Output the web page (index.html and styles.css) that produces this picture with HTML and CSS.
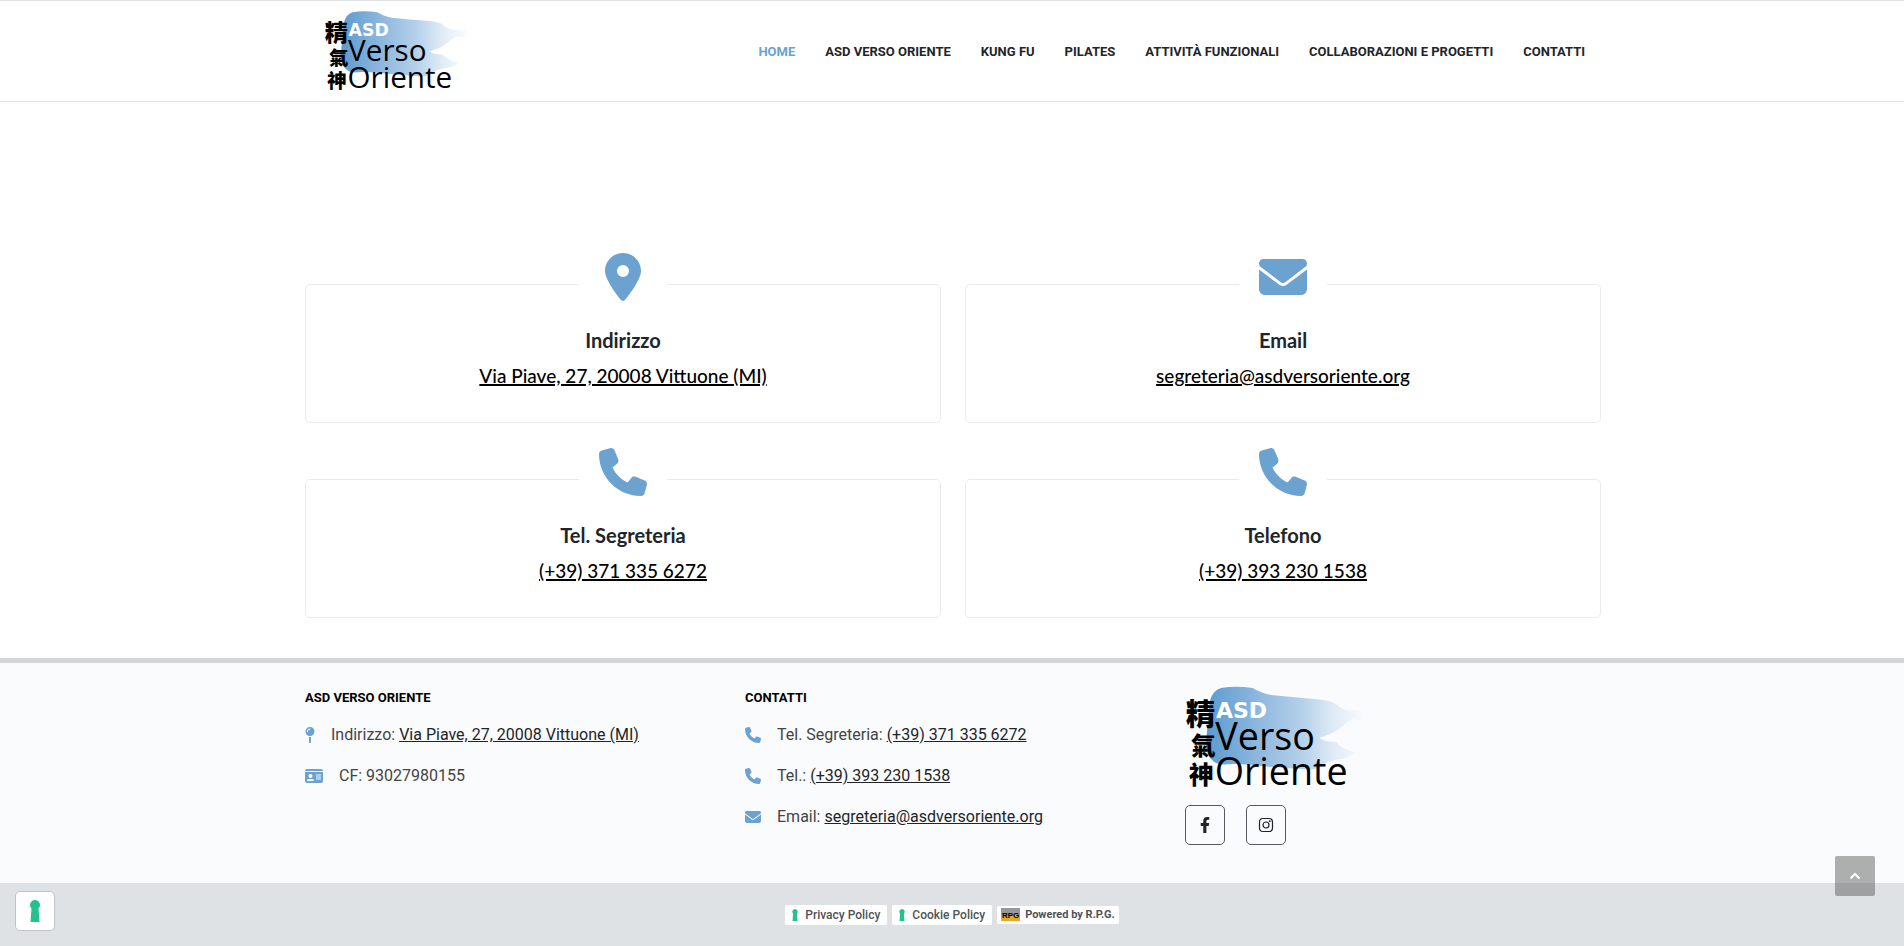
FILE: index.html
```
<!DOCTYPE html>
<html lang="it">

<head>
    <meta charset="utf-8">
    <meta name="viewport" content="width=device-width, initial-scale=1">
    <title>ASD Verso Oriente</title>
    <link rel="stylesheet" href="styles.css">
</head>

<body>
    <!-- shared icons -->
    <svg class="sprite" aria-hidden="true">
        <symbol id="icon-location" viewBox="0 0 384 512">
            <path d="M215.7 499.2C267 435 384 279.4 384 192C384 86 298 0 192 0S0 86 0 192c0 87.4 117 243 168.3 307.2c12.3 15.3 35.1 15.3 47.4 0zM192 128a64 64 0 1 1 0 128 64 64 0 1 1 0-128z"/>
        </symbol>
        <symbol id="icon-envelope" viewBox="0 0 512 512">
            <path d="M48 64C21.5 64 0 85.5 0 112c0 15.1 7.1 29.3 19.2 38.4L236.8 313.6c11.4 8.5 27 8.5 38.4 0L492.8 150.4c12.1-9.1 19.2-23.3 19.2-38.4c0-26.5-21.5-48-48-48H48zM0 176V384c0 35.3 28.7 64 64 64H448c35.3 0 64-28.7 64-64V176L294.4 339.2c-22.8 17.1-54 17.1-76.8 0L0 176z"/>
        </symbol>
        <symbol id="icon-phone" viewBox="0 0 512 512">
            <path d="M164.9 24.6c-7.7-18.6-28-28.5-47.4-23.2l-88 24C12.1 30.2 0 46 0 64C0 311.4 200.6 512 448 512c18 0 33.8-12.1 38.6-29.5l24-88c5.3-19.4-4.6-39.7-23.2-47.4l-96-40c-16.3-6.8-35.2-2.1-46.3 11.6L304.7 368C234.3 334.7 177.3 277.7 144 207.3L193.3 167c13.7-11.2 18.4-30 11.6-46.3l-40-96z"/>
        </symbol>
        <symbol id="icon-pin" viewBox="0 0 320 512">
            <path fill-rule="evenodd" d="M16 144a144 144 0 1 1 288 0A144 144 0 1 1 16 144zM160 80c9 0 16-7 16-16s-7-16-16-16c-53 0-96 43-96 96 0 9 7 16 16 16s16-7 16-16c0-35 29-64 64-64z"/>
            <path d="M128 317c10 2 21 3 32 3s22-1 32-3V480c0 18-14 32-32 32s-32-14-32-32z"/>
        </symbol>
        <symbol id="icon-card" viewBox="0 0 576 512">
            <path fill-rule="evenodd" d="M0 96c0-35 29-64 64-64H512c35 0 64 29 64 64H0zM0 128H576V416c0 35-29 64-64 64H64c-35 0-64-29-64-64zM64 405c0 6 5 11 11 11H277c6 0 11-5 11-11 0-29-24-53-53-53H117c-29 0-53 24-53 53zM176 320a64 64 0 1 0 0-128 64 64 0 1 0 0 128zM352 208v32H512v-32zM352 272v32H512v-32zM352 336v32H512v-32z"/>
        </symbol>
        <symbol id="icon-keyhole" viewBox="0 0 20 44">
            <path d="M10 0a10 10 0 0 1 7 17L19 44H1L3 17A10 10 0 0 1 10 0z"/>
        </symbol>
        <symbol id="brush" viewBox="42 42 570 324">
            <linearGradient id="brush-fill" x1="0" x2="1" y1="0" y2="0">
                <stop offset="0" stop-color="#5b9acf"/>
                <stop offset=".3" stop-color="#8ab5dd"/>
                <stop offset=".6" stop-color="#b4d0ea"/>
                <stop offset=".8" stop-color="#dfebf6"/>
                <stop offset="1" stop-color="#fafcfe"/>
            </linearGradient>
            <path fill="url(#brush-fill)" d="M116 96Q124 62 150 54Q195 47 245 54Q266 68 300 75Q370 82 430 87Q480 90 498 104Q515 122 545 122L584 122L574 152L545 147Q520 162 500 180Q478 194 445 203Q455 215 495 216Q505 232 552 248Q535 265 500 268L470 275Q440 304 400 298L290 290Q210 278 150 284Q112 276 104 230Z"/>
        </symbol>
    </svg>

    <header class="header">
        <div class="container header-inner">
            <a class="brand" href="#" aria-label="ASD Verso Oriente">
                <svg class="logo" viewBox="42 42 570 324">
                    <use href="#brush" x="42" y="42" width="570" height="324"/>
                    <text x="44" y="165" class="logo-ideogram">精</text>
                    <text x="60" y="256" class="logo-ideogram small">氣</text>
                    <text x="54" y="343" class="logo-ideogram small">神</text>
                    <text x="135" y="144" class="logo-asd">ASD</text>
                    <text x="133" y="241" class="logo-name">Verso</text>
                    <text x="131" y="344" class="logo-name">Oriente</text>
                </svg>
            </a>
            <nav class="menu">
                <a class="active" href="#">HOME</a>
                <a href="#">ASD VERSO ORIENTE</a>
                <a href="#">KUNG FU</a>
                <a href="#">PILATES</a>
                <a href="#">ATTIVITÀ FUNZIONALI</a>
                <a href="#">COLLABORAZIONI E PROGETTI</a>
                <a href="#">CONTATTI</a>
            </nav>
        </div>
    </header>

    <main class="container cards">
        <section class="card">
            <div class="card-icon"><svg><use href="#icon-location"/></svg></div>
            <h2>Indirizzo</h2>
            <a href="#">Via Piave, 27, 20008 Vittuone (MI)</a>
        </section>
        <section class="card">
            <div class="card-icon"><svg><use href="#icon-envelope"/></svg></div>
            <h2>Email</h2>
            <a href="mailto:segreteria@asdversoriente.org">segreteria@asdversoriente.org</a>
        </section>
        <section class="card">
            <div class="card-icon"><svg><use href="#icon-phone"/></svg></div>
            <h2>Tel. Segreteria</h2>
            <a href="tel:+393713356272">(+39) 371 335 6272</a>
        </section>
        <section class="card">
            <div class="card-icon"><svg><use href="#icon-phone"/></svg></div>
            <h2>Telefono</h2>
            <a href="tel:+393932301538">(+39) 393 230 1538</a>
        </section>
    </main>

    <footer class="footer">
        <div class="container footer-columns">
            <section>
                <h3>ASD VERSO ORIENTE</h3>
                <ul>
                    <li><svg class="narrow"><use href="#icon-pin"/></svg><span>Indirizzo: <a href="#">Via Piave, 27, 20008 Vittuone (MI)</a></span></li>
                    <li><svg class="wide"><use href="#icon-card"/></svg><span>CF: 93027980155</span></li>
                </ul>
            </section>
            <section>
                <h3>CONTATTI</h3>
                <ul>
                    <li><svg><use href="#icon-phone"/></svg><span>Tel. Segreteria: <a href="tel:+393713356272">(+39) 371 335 6272</a></span></li>
                    <li><svg><use href="#icon-phone"/></svg><span>Tel.: <a href="tel:+393932301538">(+39) 393 230 1538</a></span></li>
                    <li><svg><use href="#icon-envelope"/></svg><span>Email: <a href="mailto:segreteria@asdversoriente.org">segreteria@asdversoriente.org</a></span></li>
                </ul>
            </section>
            <section class="footer-brand">
                <svg class="logo" viewBox="42 42 570 324">
                    <use href="#brush" x="42" y="42" width="570" height="324"/>
                    <text x="44" y="165" class="logo-ideogram">精</text>
                    <text x="60" y="256" class="logo-ideogram small">氣</text>
                    <text x="54" y="343" class="logo-ideogram small">神</text>
                    <text x="135" y="144" class="logo-asd">ASD</text>
                    <text x="133" y="241" class="logo-name">Verso</text>
                    <text x="131" y="344" class="logo-name">Oriente</text>
                </svg>
                <div class="social">
                    <a href="#" aria-label="Facebook">
                        <svg viewBox="0 0 320 512"><path d="M279 288l14-93h-89v-60c0-25 12-50 52-50h41V7s-37-7-72-7c-73 0-121 44-121 125v70H23v93h81v224h100V288z"/></svg>
                    </a>
                    <a href="#" aria-label="Instagram">
                        <svg viewBox="0 0 16 16"><rect class="line" x="1.5" y="1.5" width="13" height="13" rx="3.5"/><circle class="line" cx="8" cy="8" r="3"/><circle cx="11.8" cy="4.2" r=".9"/></svg>
                    </a>
                </div>
            </section>
        </div>
    </footer>

    <div class="bottom">
        <a class="badge" href="#"><svg><use href="#icon-keyhole"/></svg>Privacy Policy</a>
        <a class="badge" href="#"><svg><use href="#icon-keyhole"/></svg>Cookie Policy</a>
        <a class="badge rpg" href="#">
            <svg viewBox="0 0 19 13">
                <rect width="19" height="7" fill="#96999c"/>
                <rect y="7" width="19" height="6" fill="#e3a92b"/>
                <text x="1" y="10">RPG</text>
            </svg>Powered by R.P.G.
        </a>
    </div>

    <button class="privacy" type="button" aria-label="Preferenze privacy"><svg><use href="#icon-keyhole"/></svg></button>
    <button class="to-top" type="button" aria-label="Torna su">
        <svg viewBox="0 0 12 8"><path d="M1.5 6.5L6 2l4.5 4.5"/></svg>
    </button>
</body>

</html>
```
FILE: styles.css
```
* {
    box-sizing: border-box;
}

body {
    margin: 0;
    background: #fff;
    color: #444;
    font: 16px/25px Roboto, sans-serif;
}

a {
    color: #212529;
}

svg {
    display: block;
    fill: currentColor;
}

button {
    padding: 0;
    cursor: pointer;
}

.sprite {
    position: absolute;
    width: 0;
    height: 0;
}

.container {
    max-width: 1320px;
    margin: 0 auto;
    padding: 0 11px 0 13px;
}

/* logo */
.logo {
    width: 190px;
    height: 108px;
    overflow: visible;
}

.logo-ideogram {
    fill: #000;
    font: 900 88px "Noto Sans CJK TC", sans-serif;
}

.logo-ideogram.small {
    font-size: 74px;
}

.logo-asd {
    fill: #fff;
    font: bold 66px "DejaVu Sans", sans-serif;
}

.logo-name {
    fill: #000;
    font: 500 113px "Open Sans", sans-serif;
}

/* header */
.header {
    border-top: 1px solid #dee2e6;
    border-bottom: 1px solid #dee2e6;
}

.header-inner {
    display: flex;
    align-items: center;
    justify-content: space-between;
    min-height: 100px;
    padding: 0 27px 0 32px;
}

.header .logo {
    width: 150px;
    height: 85px;
}

.menu {
    display: flex;
    gap: 30px;
    padding-top: 2px;
}

.menu a,
.footer h3 {
    font: bold 13px/20px Roboto, sans-serif;
    text-decoration: none;
}

.menu .active {
    color: #6ba2d0;
}

/* contact cards */
.cards {
    display: grid;
    grid-template-columns: 1fr 1fr;
    gap: 56px 24px;
    padding-top: 182px;
    padding-bottom: 40px;
}

.card {
    display: flex;
    flex-direction: column;
    align-items: center;
    padding-bottom: 29px;
    border: 1px solid #e9ebec;
    border-radius: 5px;
    font: 500 19px/35px Lato, sans-serif;
}

.card-icon {
    margin-top: -32px;
    padding: 0 20px;
    background: #fff;
    color: #6ba2d0;
}

.card-icon svg {
    width: 48px;
    height: 48px;
}

.card h2 {
    margin: 22px 0 0;
    color: #212529;
    font: inherit;
    font-size: 20px;
    font-weight: bold;
}

.card a {
    color: #000;
    text-decoration-thickness: 2px;
}

/* footer */
.footer {
    border-top: 5px solid #d3d5d7;
    background: #f9fbfc;
}

.footer-columns {
    display: grid;
    grid-template-columns: repeat(3, 1fr);
    gap: 24px;
    padding-top: 21px;
    padding-bottom: 38px;
}

.footer h3 {
    margin: 4px 0 14px;
    color: #000;
}

.footer ul {
    margin: 0;
    padding: 0;
    list-style: none;
}

.footer li {
    display: flex;
    align-items: center;
    gap: 16px;
    margin-bottom: 16px;
}

.footer li:last-child {
    margin-bottom: 0;
}

.footer li svg {
    width: 16px;
    height: 16px;
    color: #6ba2d0;
}

.footer li .narrow {
    width: 10px;
}

.footer li .wide {
    width: 18px;
}

.social {
    display: flex;
    gap: 21px;
    margin-top: 13px;
}

.social a {
    display: flex;
    align-items: center;
    justify-content: center;
    width: 40px;
    height: 40px;
    border: 1px solid #555b60;
    border-radius: 5px;
}

.social svg {
    width: 16px;
    height: 16px;
}

.line {
    fill: none;
    stroke: #212529;
    stroke-width: 1.2px;
}

/* bottom bar */
.bottom {
    display: flex;
    justify-content: center;
    align-items: center;
    gap: 5px;
    min-height: 63px;
    background: #dee2e4;
}

.badge {
    display: flex;
    align-items: center;
    gap: 7px;
    padding: 0 7px;
    border-radius: 2px;
    background: #fff;
    color: #505356;
    font: 500 12px/20px Roboto, sans-serif;
    text-decoration: none;
}

.badge svg {
    width: 6px;
    height: 12px;
    color: #24c38c;
}

.rpg {
    gap: 5px;
    padding: 0 4px;
    font-size: 11px;
    font-weight: bold;
    line-height: 18px;
}

.rpg svg {
    width: 19px;
    height: 13px;
}

.rpg text {
    fill: #000;
    font: bold 8px "Liberation Sans", sans-serif;
}

/* floating buttons */
.privacy,
.to-top {
    position: fixed;
    display: flex;
    align-items: center;
    justify-content: center;
    width: 40px;
    height: 40px;
}

.privacy {
    left: 15px;
    bottom: 15px;
    border: 1px solid #bfc3c6;
    border-radius: 5px;
    background: #fff;
    color: #24c38c;
}

.privacy svg {
    width: 10px;
    height: 22px;
}

.to-top {
    right: 29px;
    bottom: 50px;
    border: 0;
    border-radius: 2px;
    background: rgba(80, 80, 80, .45);
}

.to-top svg {
    width: 12px;
    height: 8px;
    fill: none;
    stroke: #fff;
    stroke-width: 2px;
}
```
